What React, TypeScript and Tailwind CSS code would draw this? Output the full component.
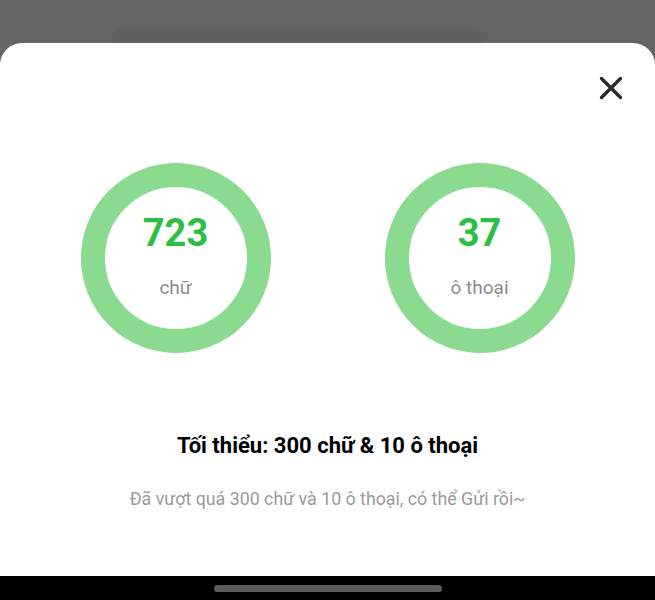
export default function App() {
  const stats = [
    { value: "723", label: "chữ" },
    { value: "37", label: "ô thoại" },
  ];

  return (
    <div
      className="w-[655px] h-[600px] flex flex-col bg-[#646464] overflow-hidden"
      style={{ fontFamily: "Roboto, 'Noto Sans', sans-serif" }}
    >
      {/* dimmed page behind the sheet */}
      <div className="h-[43px] shrink-0 flex items-end pl-[112px]">
        <div className="w-[373px] h-[16px] rounded-t-[14px] bg-[#616161]" />
      </div>

      {/* bottom sheet */}
      <div className="flex-1 bg-white rounded-t-[22px] flex flex-col">
        <div className="flex justify-end pt-[33px] pr-[32px]">
          <button className="w-[24px] h-[24px] text-[#2b2b2b]">
            <svg viewBox="0 0 24 24" width="24" height="24" fill="none" stroke="currentColor" strokeWidth="3.4" strokeLinecap="round">
              <path d="M2.5 2.5 L21.5 21.5 M21.5 2.5 L2.5 21.5" />
            </svg>
          </button>
        </div>

        <div className="mt-[63px] flex justify-center gap-[114px]">
          {stats.map((s) => (
            <div
              key={s.label}
              className="w-[190px] h-[190px] rounded-full border-[24px] border-[#8adb8f] flex flex-col items-center justify-center pb-[4px]"
            >
              <div className="text-[38px] leading-[44px] font-bold text-[#2ebd45]">{s.value}</div>
              <div className="mt-[20px] text-[19px] leading-[26px] text-[#8c8c8c]">{s.label}</div>
            </div>
          ))}
        </div>

        <div className="mt-[79px] text-center text-[22px] leading-[28px] font-bold text-black">
          Tối thiểu: 300 chữ &amp; 10 ô thoại
        </div>
        <div className="mt-[27px] text-center text-[17.8px] leading-[24px] text-[#9a9a9a]">
          Đã vượt quá 300 chữ và 10 ô thoại, có thể Gửi rồi~
        </div>
      </div>

      {/* navigation bar */}
      <div className="h-[24px] shrink-0 bg-black flex justify-center pt-[9px]">
        <div className="w-[228px] h-[7px] rounded-full bg-[#5c5c5c]" />
      </div>
    </div>
  );
}
